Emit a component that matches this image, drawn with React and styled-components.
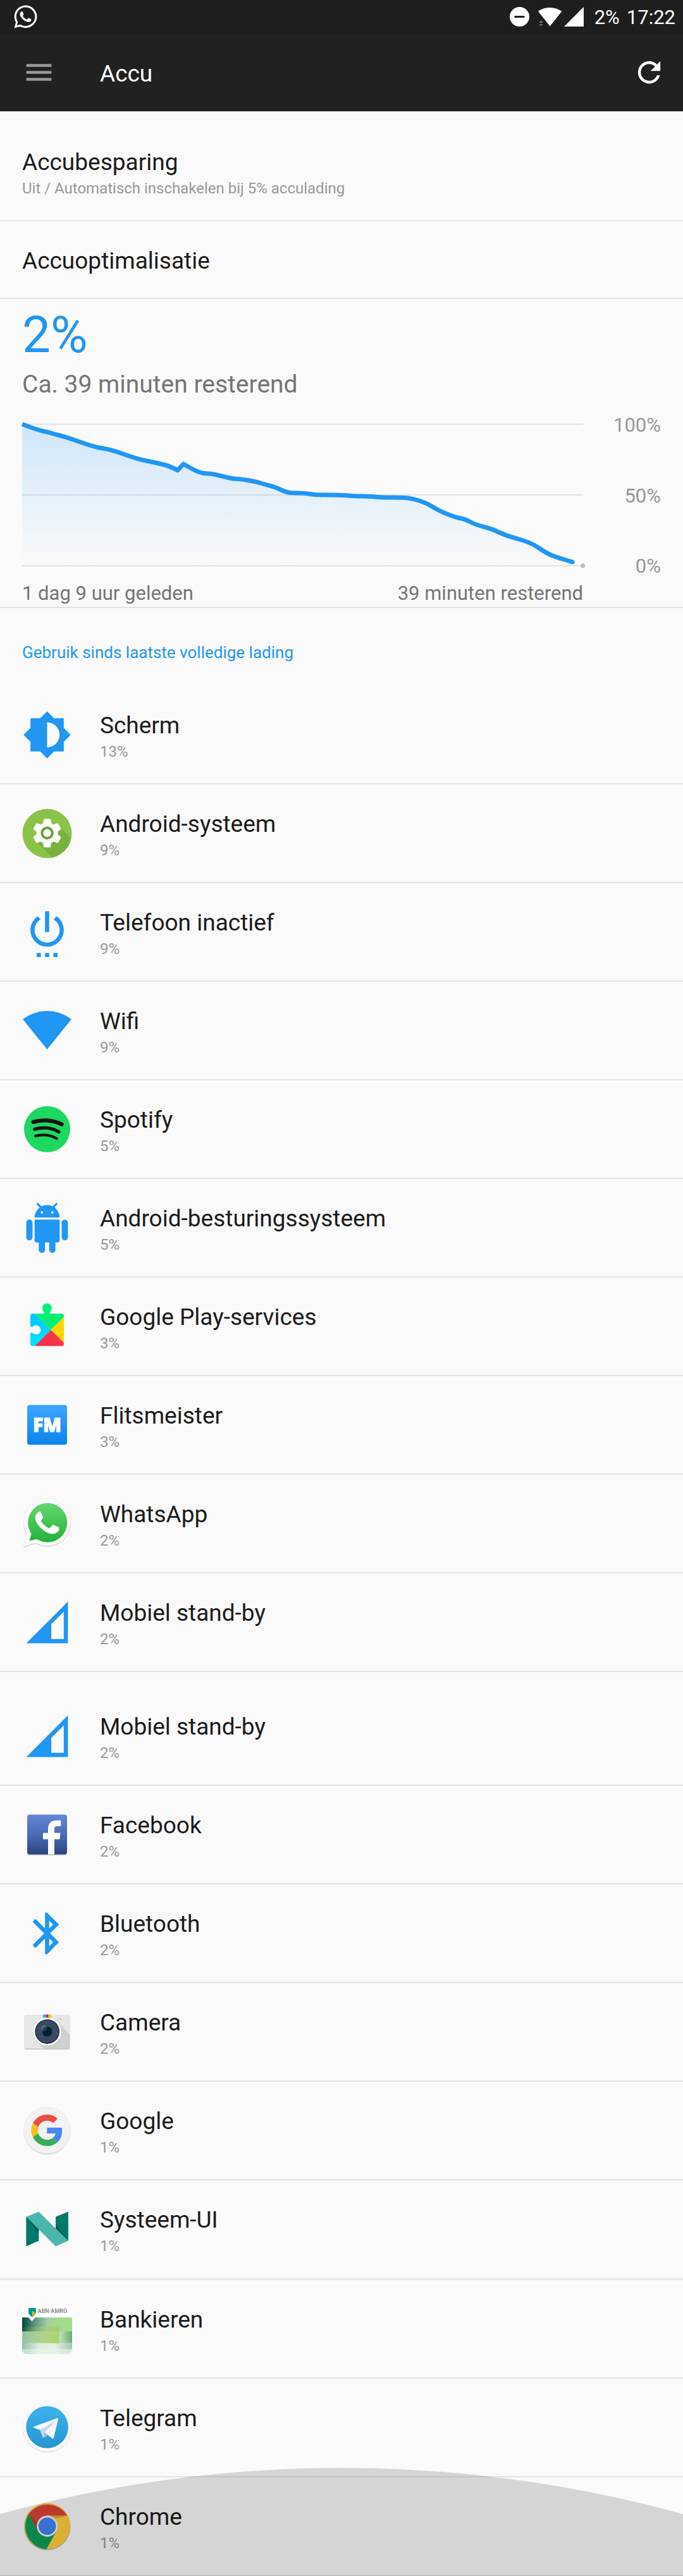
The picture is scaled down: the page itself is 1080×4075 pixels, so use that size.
import React from "react";
import styled, { createGlobalStyle } from "styled-components";
import { FaWhatsapp } from "react-icons/fa";

const color = {
  accent: "#2196f3",
  text: "#1b1b1b",
  muted: "#999999",
  label: "#757575",
  divider: "#e4e4e4",
  page: "#fafafa",
};

const GlobalStyle = createGlobalStyle`
  *, *::before, *::after { box-sizing: border-box; }
  body { margin: 0; background: ${color.page}; }
  svg { display: block; flex: none; }
`;

const Page = styled.div`
  position: relative;
  overflow: hidden;
  background: ${color.page};
  color: ${color.text};
  font-family: Roboto, "Noto Sans", sans-serif;
`;

const StatusBar = styled.div`
  display: flex;
  align-items: center;
  justify-content: space-between;
  height: 53px;
  padding: 0 12px 0 20px;
  background: #1e1e1e;
  color: #fff;
`;

const StatusGroup = styled.div`
  display: flex;
  align-items: center;
`;

const StatusIcons = styled.div`
  display: flex;
  align-items: center;
  margin-right: 17px;
`;

const StatusText = styled.span`
  padding-top: 2px;
  font-size: 31px;
  line-height: 36px;
  & + & { margin-left: 11px; }
`;

const AppBar = styled.header`
  display: flex;
  align-items: center;
  height: 124px;
  padding: 0 27px 0 35px;
  border-bottom: 1px solid #e0e0e0;
  background: #212121;
  background-clip: padding-box;
`;

const IconButton = styled.button`
  display: flex;
  padding: 0;
  border: 0;
  background: none;
  color: ${(p) => p.$tone};
  cursor: pointer;
`;

const AppTitle = styled.h1`
  flex: 1;
  margin: 0;
  padding: 4px 0 0 70px;
  color: #fff;
  font-size: 37px;
  font-weight: 400;
  line-height: 44px;
`;

const SettingsList = styled.ul`
  margin: 0;
  padding: ${(p) => p.$top || 0}px 0 0;
  list-style: none;
`;

const Item = styled.li`
  padding-top: ${(p) => (p.$spaced ? 24 : 0)}px;
  border-bottom: ${(p) => (p.$hairline ? 1 : 2)}px solid ${color.divider};
`;

const Seam = styled.li`
  height: 3px;
  border-bottom: 2px solid ${color.divider};
`;

const ItemButton = styled.button`
  display: flex;
  gap: 44px;
  width: 100%;
  padding: 0 35px;
  border: 0;
  background: none;
  color: inherit;
  font: inherit;
  text-align: left;
  cursor: pointer;
`;

const IconSlot = styled.span`
  align-self: center;
  flex: none;
  svg { width: 79px; height: 79px; }
`;

const ItemText = styled.span`
  display: flex;
  flex-direction: column;
  gap: 5px;
  padding: 41px 0 36px;
`;

const Name = styled.span`
  font-size: 37px;
  line-height: 44px;
`;

const Detail = styled.span`
  color: ${color.muted};
  font-size: 24px;
  line-height: 28px;
`;

const Summary = styled.section`
  padding: 17px 35px 3px;
  border-bottom: 2px solid ${color.divider};
`;

const Level = styled.div`
  color: ${color.accent};
  font-size: 80px;
  line-height: 80px;
`;

const Remaining = styled.div`
  margin: 15px 0 23px;
  color: ${color.label};
  font-size: 39px;
  line-height: 46px;
`;

const ChartGrid = styled.div`
  display: grid;
  grid-template-columns: 1fr 123px;
  row-gap: 6px;
  font-size: 31px;
  line-height: 37px;
`;

const Plot = styled.svg`
  width: 100%;
  height: 260px;
  overflow: visible;
`;

const Scale = styled.div`
  display: flex;
  flex-direction: column;
  justify-content: space-between;
  color: ${color.muted};
  text-align: right;
`;

const TimeAxis = styled.div`
  display: flex;
  justify-content: space-between;
  color: ${color.label};
`;

const SectionTitle = styled.h2`
  margin: 0;
  padding: 55px 35px 38px;
  color: ${color.accent};
  font-size: 26px;
  font-weight: 400;
  line-height: 30px;
`;

const Ripple = styled.div`
  position: absolute;
  right: 0;
  bottom: 0;
  left: 0;
  height: 171px;
  overflow: hidden;
  pointer-events: none;
  &::before {
    content: "";
    position: absolute;
    top: 0;
    left: calc(50% - 2034px);
    width: 4068px;
    height: 4068px;
    border-radius: 50%;
    background: rgba(0, 0, 0, 0.145);
  }
`;

/* ---------- battery curve ---------- */

const curve = [
  [0, 17], [27, 27], [39, 29], [52, 33], [68, 37], [94, 46], [118, 54], [140, 57],
  [182, 72], [202, 76], [220, 80], [232, 83], [246, 90], [246, 90], [255, 80],
  [255, 80], [282, 95], [300, 95], [330, 103], [347, 104], [370, 108], [386, 113],
  [399, 116], [416, 124], [426, 126], [447, 126], [464, 129], [505, 129],
  [526, 131], [550, 131], [567, 133], [602, 133], [619, 135], [640, 142],
  [659, 154], [687, 165], [700, 167], [717, 176], [744, 183], [764, 193],
  [804, 204], [826, 219], [840, 226], [870, 235],
];

function smooth(points) {
  let d = `M${points[0][0]} ${points[0][1]}`;
  for (let i = 1; i < points.length - 1; i++) {
    const [x, y] = points[i];
    const [nx, ny] = points[i + 1];
    d += `Q${x} ${y} ${(x + nx) / 2} ${(y + ny) / 2}`;
  }
  const [lx, ly] = points[points.length - 1];
  return `${d}L${lx} ${ly}`;
}

function BatteryPlot() {
  const line = smooth(curve);
  return (
    <Plot viewBox="0 0 887 260" preserveAspectRatio="none" role="img" aria-label="Acculading">
      <defs>
        <linearGradient id="charge" x1="0" y1="0" x2="0" y2="1">
          <stop offset="0" stopColor="#2196f3" stopOpacity="0.2" />
          <stop offset="1" stopColor="#2196f3" stopOpacity="0" />
        </linearGradient>
      </defs>
      {[16, 128, 240].map((y) => (
        <rect key={y} x="0" y={y} width="887" height="2" fill={color.divider} />
      ))}
      <path d={`${line}V240H0Z`} fill="url(#charge)" />
      <path d={line} fill="none" stroke={color.accent} strokeWidth="7" strokeLinejoin="round" />
      <circle cx="870" cy="235" r="3.5" fill={color.accent} />
      <circle cx="886.5" cy="241" r="3.5" fill="#b0bec5" />
    </Plot>
  );
}

/* ---------- icons ---------- */

const Glyph = ({ d, size = 79, box = "0 0 24 24" }) => (
  <svg width={size} height={size} viewBox={box} fill="currentColor" color={size === 79 ? color.accent : undefined} aria-hidden="true">
    <path fillRule="evenodd" d={d} />
  </svg>
);

const paths = {
  menu: "M3 18h18v-2H3v2zm0-5h18v-2H3v2zm0-7v2h18V6H3z",
  refresh: "M17.65 6.35C16.2 4.9 14.21 4 12 4c-4.42 0-7.99 3.58-7.99 8s3.57 8 7.99 8c3.73 0 6.84-2.55 7.73-6h-2.08c-.82 2.33-3.04 4-5.65 4-3.31 0-6-2.69-6-6s2.69-6 6-6c1.66 0 3.14.69 4.22 1.78L13 11h7V4l-2.35 2.35z",
  screen: "M20 15.31L23.31 12 20 8.69V4h-4.69L12 .69 8.69 4H4v4.69L.69 12 4 15.31V20h4.69L12 23.31 15.31 20H20v-4.69zM12 18V6c3.31 0 6 2.69 6 6s-2.69 6-6 6z",
  idle: "M7 24h2v-2H7v2zm4 0h2v-2h-2v2zm2-22h-2v10h2V2zm3.56 2.44l-1.45 1.45C16.84 6.94 18 8.83 18 11c0 3.31-2.69 6-6 6s-6-2.69-6-6c0-2.17 1.16-4.06 2.88-5.12L7.44 4.44C5.36 5.88 4 8.28 4 11c0 4.42 3.58 8 8 8s8-3.58 8-8c0-2.72-1.36-5.12-3.44-6.56zM15 24h2v-2h-2v2z",
  wifi: "M12.01 21.49L23.64 7c-.45-.34-4.93-4-11.64-4C5.28 3 .81 6.66.36 7l11.63 14.49.01.01.01-.01z",
  android: "M6 18c0 .55.45 1 1 1h1v3.5c0 .83.67 1.5 1.5 1.5s1.5-.67 1.5-1.5V19h2v3.5c0 .83.67 1.5 1.5 1.5s1.5-.67 1.5-1.5V19h1c.55 0 1-.45 1-1V8H6v10zM3.5 8C2.67 8 2 8.67 2 9.5v7c0 .83.67 1.5 1.5 1.5S5 17.33 5 16.5v-7C5 8.67 4.33 8 3.5 8zm17 0c-.83 0-1.5.67-1.5 1.5v7c0 .83.67 1.5 1.5 1.5s1.5-.67 1.5-1.5v-7c0-.83-.67-1.5-1.5-1.5zm-4.97-5.84l1.3-1.3c.2-.2.2-.51 0-.71-.2-.2-.51-.2-.71 0l-1.48 1.48C13.85 1.23 12.95 1 12 1c-.96 0-1.86.23-2.66.63L7.85.15c-.2-.2-.51-.2-.71 0-.2.2-.2.51 0 .71l1.31 1.31C6.97 3.26 6 5.01 6 7h12c0-1.99-.97-3.75-2.47-4.84zM10 5H9V4h1v1zm5 0h-1V4h1v1z",
  cell: "M2 22h20V2L2 22zM20 20h-6v-7.17l6-6z",
  bluetooth: "M17.71 7.71L12 2h-1v7.59L6.41 5 5 6.41 10.59 12 5 17.59 6.41 19 11 14.41V22h1l5.71-5.71-4.3-4.29 4.3-4.29zM13 5.83l1.88 1.88L13 9.59V5.83zm1.88 10.46L13 18.17v-3.76l1.88 1.88z",
  gear: "M19.43 12.98c.04-.32.07-.64.07-.98s-.03-.66-.07-.98l2.11-1.65c.19-.15.24-.42.12-.64l-2-3.46c-.12-.22-.39-.3-.61-.22l-2.49 1c-.52-.4-1.08-.73-1.69-.98l-.38-2.65C14.46 2.18 14.25 2 14 2h-4c-.25 0-.46.18-.49.42l-.38 2.65c-.61.25-1.17.59-1.69.98l-2.49-1c-.23-.09-.49 0-.61.22l-2 3.46c-.13.22-.07.49.12.64l2.11 1.65c-.04.32-.07.65-.07.98s.03.66.07.98l-2.11 1.65c-.19.15-.24.42-.12.64l2 3.46c.12.22.39.3.61.22l2.49-1c.52.4 1.08.73 1.69.98l.38 2.65c.03.24.24.42.49.42h4c.25 0 .46-.18.49-.42l.38-2.65c.61-.25 1.17-.59 1.69-.98l2.49 1c.23.09.49 0 .61-.22l2-3.46c.12-.22.07-.49-.12-.64l-2.11-1.65z",
};

const Art = ({ children }) => (
  <svg viewBox="0 0 79 79" aria-hidden="true">{children}</svg>
);

const Fade = ({ id, stops, across }) => (
  <linearGradient id={id} x1="0" y1="0" x2={across ? 1 : 0} y2={across ? 0 : 1}>
    {stops.map((c, i) => (
      <stop key={i} offset={i / (stops.length - 1)} stopColor={c} />
    ))}
  </linearGradient>
);

const SystemIcon = () => (
  <Art>
    <clipPath id="sysClip"><circle cx="39.5" cy="39.5" r="39" /></clipPath>
    <circle cx="39.5" cy="39.5" r="39" fill="#8bc34a" />
    <path d="M57 27L95 65L80 95L60 90L24 54Z" fill="#33691e" opacity="0.2" clipPath="url(#sysClip)" />
    <circle cx="39.6" cy="38.8" r="12" fill="#689f38" />
    <path transform="translate(12.6 11.9) scale(2.25)" d={paths.gear} fill="#fff" />
    <circle cx="39.6" cy="38.8" r="10.2" fill="#689f38" />
    <circle cx="39.6" cy="38.8" r="6.2" fill="#fff" />
  </Art>
);

const SpotifyIcon = () => (
  <Art>
    <circle cx="39.5" cy="39.2" r="36.5" fill="#1ed760" />
    <g fill="none" stroke="#191414" strokeLinecap="round">
      <path d="M17.8 27.8C33 23.5 50 25 62.5 31.6" strokeWidth="6.4" />
      <path d="M20 39.3C34 35.5 47 37 58 43.5" strokeWidth="5.3" />
      <path d="M21 50C33 47 44 48 54.5 54" strokeWidth="4.3" />
    </g>
  </Art>
);

const PlayServicesIcon = () => (
  <Art>
    <defs>
      <clipPath id="playClip"><rect x="13" y="19" width="53" height="51.5" rx="3.5" /></clipPath>
      <Fade id="playBlue" stops={["#00c3ff", "#00e5ff"]} />
      <Fade id="playRed" stops={["#e92c50", "#ff3a44"]} across />
    </defs>
    <path d="M34.5 20V17.5C34.5 15.8 32 14.5 32 10A7.3 7.3 0 0 1 46.6 10C46.6 14.5 44 15.8 44 17.5V20Z" fill="#00f076" />
    <g clipPath="url(#playClip)">
      <path d="M13 19H20L45.3 44.8L20 70.5H13Z" fill="url(#playBlue)" />
      <path d="M20 19H66V24.5L45.3 44.8Z" fill="#00f076" />
      <path d="M66 24.5V65L45.3 44.8Z" fill="#ffd500" />
      <path d="M66 65V70.5H20L45.3 44.8Z" fill="url(#playRed)" />
    </g>
    <path d="M12 38.5C14 40.8 16 40 18 39A7.2 7.2 0 1 1 18 50.6C16 49.4 14 49 12 51Z" fill={color.page} />
  </Art>
);

const FlitsIcon = () => (
  <Art>
    <defs><Fade id="flits" stops={["#40a6ff", "#0a84ea"]} /></defs>
    <rect x="8" y="7.5" width="63" height="63" rx="4" fill="url(#flits)" />
    <text x="39.5" y="49.8" textAnchor="middle" fill="#fff" stroke="#fff" strokeWidth="1" fontFamily="Open Sans, sans-serif" fontWeight="800" fontSize="30">FM</text>
  </Art>
);

const WhatsAppIcon = () => (
  <Art>
    <defs><Fade id="wa" stops={["#66d66f", "#25b13a"]} /></defs>
    <path d="M2.5 76.5L8 57.5A37.2 37.2 0 1 1 22 70.8Z" fill="#c4c4c4" stroke="#dddddd" strokeWidth="1" />
    <path d="M2.8 75.2L8 56.5A37 37 0 1 1 22 69.8Z" fill="#fcfcfc" stroke="#e6e6e6" strokeWidth="0.6" />
    <path d="M11.5 66.5L14.5 55A31 31 0 1 1 23.5 63.8Z" fill="url(#wa)" />
    <path d="M26 21.2c-3.2 1-5.5 5-5.3 9.5c.3 5 4 11 10 16.5c6 5.5 13 8.5 18 8.2c5-.3 9-3.5 9.8-7.2c.4-2 .3-2.6-.8-3.2l-7.5-3.6c-1.2-.5-2-.3-2.8.7l-3 3.7c-.7.8-1.4.9-2.5.4c-5-2.2-8.8-5.8-11.5-10.4c-.6-1-.5-1.7.2-2.5l2-2.6c.6-.8.6-1.5.3-2.4l-3.2-7.2c-.6-1.3-2-1.5-3.7 0z" fill="#fff" />
  </Art>
);

const FacebookIcon = () => (
  <Art>
    <defs><Fade id="fb" stops={["#6287d6", "#4a6cb5", "#2b457f"]} /></defs>
    <rect x="8" y="9" width="63" height="63" rx="4" fill="#000" opacity="0.2" />
    <rect x="8" y="7.5" width="63" height="63" rx="4" fill="url(#fb)" />
    <path d="M41 70.5V46.5H33V36.6H41V30C41 21.5 46 16.8 53.5 16.8H61.3V25.8H56C52.5 25.8 51 27.2 51 30.5V36.6H60.5L59.5 46.5H51V70.5Z" fill="#fff" />
  </Art>
);

const CameraIcon = () => (
  <Art>
    <rect x="3.7" y="13" width="71.6" height="54" rx="2.5" fill="#b9b9b9" />
    <rect x="3.7" y="12.2" width="71.6" height="53.5" rx="2.5" fill="#e6e6e6" />
    <path d="M56 24L75.3 43V63.5Q75.3 65.7 73 65.7H34.5L24 55Z" fill="#cfcfcf" />
    <rect x="33" y="11.7" width="4.4" height="7" fill="#12cfcf" />
    <rect x="37.4" y="11.7" width="4.3" height="7" fill="#e6006f" />
    <rect x="41.7" y="11.7" width="4.4" height="7" fill="#f4c40c" />
    <circle cx="60.3" cy="18.5" r="1.7" fill="#cccccc" />
    <circle cx="39.7" cy="39.8" r="22.3" fill="#b5b5b5" />
    <circle cx="39.7" cy="38.8" r="22.3" fill="#fff" />
    <circle cx="39.7" cy="38.8" r="19.4" fill="#223340" />
    <circle cx="39.7" cy="38.8" r="17.8" fill="#394a64" />
    <circle cx="39.7" cy="38.8" r="7.8" fill="#04202f" />
    <circle cx="34.5" cy="33.5" r="5" fill="#fff" opacity="0.14" />
  </Art>
);

const GoogleIcon = () => (
  <Art>
    <circle cx="39.5" cy="40.2" r="37" fill="#c9c9c9" />
    <circle cx="39.5" cy="39" r="37" fill="#f2f2f2" stroke="#e8e8e8" strokeWidth="0.6" />
    <g transform="translate(14.4 13.9) scale(1.04)">
      <path fill="#ea4f42" d="M24 9.5c3.54 0 6.71 1.22 9.21 3.6l6.85-6.85C35.9 2.38 30.47 0 24 0 14.62 0 6.51 5.38 2.56 13.22l7.98 6.19C12.43 13.72 17.74 9.5 24 9.5z" />
      <path fill="#4888f4" d="M46.98 24.55c0-1.57-.15-3.09-.38-4.55H24v9.02h12.94c-.58 2.96-2.26 5.48-4.78 7.18l7.73 6c4.51-4.18 7.09-10.36 7.09-17.65z" />
      <path fill="#fbbf12" d="M10.53 28.59c-.48-1.45-.76-2.99-.76-4.59s.27-3.14.76-4.59l-7.98-6.19C.92 16.46 0 20.12 0 24c0 3.88.92 7.54 2.56 10.78l7.97-6.19z" />
      <path fill="#3baa58" d="M24 48c6.48 0 11.93-2.13 15.89-5.81l-7.73-6c-2.15 1.45-4.92 2.3-8.16 2.3-6.26 0-11.57-4.22-13.47-9.91l-7.98 6.19C6.51 42.62 14.62 48 24 48z" />
    </g>
  </Art>
);

const NougatIcon = () => (
  <Art>
    <path d="M6.3 19.8V66.5L26.3 57.8V38Z" fill="#00796b" />
    <path d="M53 19.8L73 11.8V57.8L53 40Z" fill="#00796b" />
    <path d="M6.3 19.8L26.3 46V36Z" fill="#005b50" />
    <path d="M53 31.5L73 57.8L53 40Z" fill="#005b50" />
    <path d="M6.3 19.8L26.3 11.8L73 57.8L53 66.5Z" fill="#4db6ac" />
  </Art>
);

const BankIcon = () => (
  <Art>
    <defs>
      <clipPath id="bankClip"><rect width="79" height="79" rx="8" /></clipPath>
      <Fade id="bankTop" stops={["#00483a", "#5b9580", "#a2cf9f", "#a4da8c", "#a6dc8c"]} across />
      <Fade id="bankMid" stops={["#93bda9", "#b3d5b0", "#cbe3b4"]} across />
      <Fade id="bankRight" stops={["#c3e0c4", "#68ad6c"]} across />
      <Fade id="bankLow" stops={["#93bda9", "#dceee0", "#e0efe2", "#a2c6b6"]} across />
      <Fade id="bankBase" stops={["#bcdcc6", "#e6f3e6", "#e6f3e8", "#cde5d4"]} across />
      <linearGradient id="bankLime" x1="0" y1="0" x2="1" y2="0">
        <stop offset="0" stopColor="#a5cf5e" stopOpacity="0.05" />
        <stop offset="1" stopColor="#a5cf5e" stopOpacity="0.8" />
      </linearGradient>
    </defs>
    <g clipPath="url(#bankClip)">
      <rect width="79" height="79" fill="#fff" />
      <rect y="21" width="79" height="22" fill="url(#bankTop)" />
      <rect y="43" width="59" height="19" fill="url(#bankMid)" />
      <rect x="59" y="43" width="20" height="18" fill="url(#bankRight)" />
      <rect y="61" width="79" height="10" fill="url(#bankLow)" />
      <rect y="71" width="79" height="8" fill="url(#bankBase)" />
      <rect y="36" width="59" height="26" fill="url(#bankLime)" />
      <path d="M9 20H22L15.5 27Z" fill="#fff" />
      <path d="M10 6H21.7V15L15.8 20.5L10 15Z" fill="#00968a" />
      <path d="M16 10.5L21 14.5L16 19.5Z" fill="#fdb913" />
    </g>
    <text x="24.5" y="14" fill="#8c8c8c" fontFamily="Roboto, sans-serif" fontWeight="700" fontSize="9">ABN·AMRO</text>
  </Art>
);

const TelegramIcon = () => (
  <Art>
    <defs><Fade id="tg" stops={["#3eb2ef", "#2496cf"]} /></defs>
    <circle cx="39.5" cy="39.5" r="39" fill="#d9dee1" />
    <circle cx="39.5" cy="38.7" r="38.6" fill="#f7fafb" />
    <circle cx="39.6" cy="38.5" r="33.3" fill="url(#tg)" />
    <path d="M28 43L52 29L35.2 46.5L38 51L33 55.5Z" fill="#c5d6e6" />
    <path d="M18.8 37.6L55.5 24.2Q57.3 23.8 57 26L50 55.6Q49.2 57.6 47.3 56.2L35.2 46.5L52 29.3L28.5 43L18.8 39.6Q17 38.5 18.8 37.6Z" fill="#f4f8fc" />
    <path d="M35.2 46.5L40.5 50.8L34.5 55.4Q33.5 55.8 33.7 54.6Z" fill="#a9c0d6" />
  </Art>
);

const ChromeIcon = () => (
  <Art>
    <circle cx="39.7" cy="40.4" r="36.8" fill="#000" opacity="0.25" />
    <circle cx="39.7" cy="39.2" r="36.6" fill="#ffcd40" />
    <path d="M71.3 22.5H39.7L25.4 47.4L10.3 20.2A36.6 36.6 0 0 1 71.3 22.5Z" fill="#db4437" />
    <path d="M10.3 20.2L25.4 47.4H54L38.3 75.8A36.6 36.6 0 0 1 10.3 20.2Z" fill="#0f9d58" />
    <path d="M39.7 22.5H71.3L52 27Z" fill="#c98f1c" opacity="0.6" />
    <path d="M10.3 20.2L25.4 47.4L24 33Z" fill="#8e2a1f" opacity="0.35" />
    <circle cx="39.7" cy="39.2" r="16.6" fill="#f1f1f1" />
    <circle cx="39.7" cy="39.2" r="13.8" fill="#4285f4" />
  </Art>
);

const apps = [
  { name: "Scherm", share: "13%", icon: <Glyph d={paths.screen} /> },
  { name: "Android-systeem", share: "9%", icon: <SystemIcon /> },
  { name: "Telefoon inactief", share: "9%", icon: <Glyph d={paths.idle} /> },
  { name: "Wifi", share: "9%", icon: <Glyph d={paths.wifi} box="0 0.5 24 24" /> },
  { name: "Spotify", share: "5%", icon: <SpotifyIcon /> },
  { name: "Android-besturingssysteem", share: "5%", icon: <Glyph d={paths.android} /> },
  { name: "Google Play-services", share: "3%", icon: <PlayServicesIcon /> },
  { name: "Flitsmeister", share: "3%", icon: <FlitsIcon /> },
  { name: "WhatsApp", share: "2%", icon: <WhatsAppIcon /> },
  { name: "Mobiel stand-by", share: "2%", icon: <Glyph d={paths.cell} /> },
  { name: "Mobiel stand-by", share: "2%", icon: <Glyph d={paths.cell} />, spaced: true },
  { name: "Facebook", share: "2%", icon: <FacebookIcon /> },
  { name: "Bluetooth", share: "2%", icon: <Glyph d={paths.bluetooth} /> },
  { name: "Camera", share: "2%", icon: <CameraIcon /> },
  { name: "Google", share: "1%", icon: <GoogleIcon /> },
  { name: "Systeem-UI", share: "1%", icon: <NougatIcon />, seam: true },
  { name: "Bankieren", share: "1%", icon: <BankIcon /> },
  { name: "Telegram", share: "1%", icon: <TelegramIcon /> },
  { name: "Chrome", share: "1%", icon: <ChromeIcon /> },
];

function SettingRow({ name, detail, icon, spaced, hairline }) {
  return (
    <Item $spaced={spaced} $hairline={hairline}>
      <ItemButton type="button">
        {icon && <IconSlot>{icon}</IconSlot>}
        <ItemText>
          <Name>{name}</Name>
          {detail && <Detail>{detail}</Detail>}
        </ItemText>
      </ItemButton>
    </Item>
  );
}

export default function App() {
  return (
    <Page>
      <GlobalStyle />
      <StatusBar>
        <FaWhatsapp size={41} aria-hidden="true" />
        <StatusGroup>
          <StatusIcons>
            <svg width="117" height="31" viewBox="0 0 117 31" aria-hidden="true">
              <path fillRule="evenodd" fill="#fff" d="M15.5 0a15.5 15.5 0 1 0 0 31a15.5 15.5 0 1 0 0-31zM7.5 14h16v3h-16z" />
              <path fill="#fff" d="M45 7C50 3 57 1 63.6 1C70 1 77 3 82.3 7L63.6 30.5Z" />
              <path fill="#1e1e1e" d="M44 19H54.5L60 31H44Z" />
              <path fill="#6a6a6a" d="M49.5 21L53 25H46ZM49.5 30.5L53 27H46Z" />
              <path fill="#fff" d="M86 31H117V0Z" />
            </svg>
          </StatusIcons>
          <StatusText>2%</StatusText>
          <StatusText>17:22</StatusText>
        </StatusGroup>
      </StatusBar>
      <AppBar>
        <IconButton type="button" aria-label="Menu" $tone="#999999">
          <Glyph d={paths.menu} size={53} />
        </IconButton>
        <AppTitle>Accu</AppTitle>
        <IconButton type="button" aria-label="Vernieuwen" $tone="#ffffff">
          <Glyph d={paths.refresh} size={53} />
        </IconButton>
      </AppBar>
      <main>
        <SettingsList $top={17}>
          <SettingRow name="Accubesparing" detail="Uit / Automatisch inschakelen bij 5% acculading" />
          <SettingRow name="Accuoptimalisatie" />
        </SettingsList>
        <Summary>
          <Level>2%</Level>
          <Remaining>Ca. 39 minuten resterend</Remaining>
          <ChartGrid>
            <BatteryPlot />
            <Scale>
              <span>100%</span>
              <span>50%</span>
              <span>0%</span>
            </Scale>
            <TimeAxis>
              <span>1 dag 9 uur geleden</span>
              <span>39 minuten resterend</span>
            </TimeAxis>
          </ChartGrid>
        </Summary>
        <SectionTitle>Gebruik sinds laatste volledige lading</SectionTitle>
        <SettingsList>
          {apps.map((app, i) => (
            <React.Fragment key={i}>
              <SettingRow
                name={app.name}
                detail={app.share}
                icon={app.icon}
                spaced={app.spaced}
                hairline={app.seam}
              />
              {app.seam && <Seam aria-hidden="true" />}
            </React.Fragment>
          ))}
        </SettingsList>
      </main>
      <Ripple />
    </Page>
  );
}
